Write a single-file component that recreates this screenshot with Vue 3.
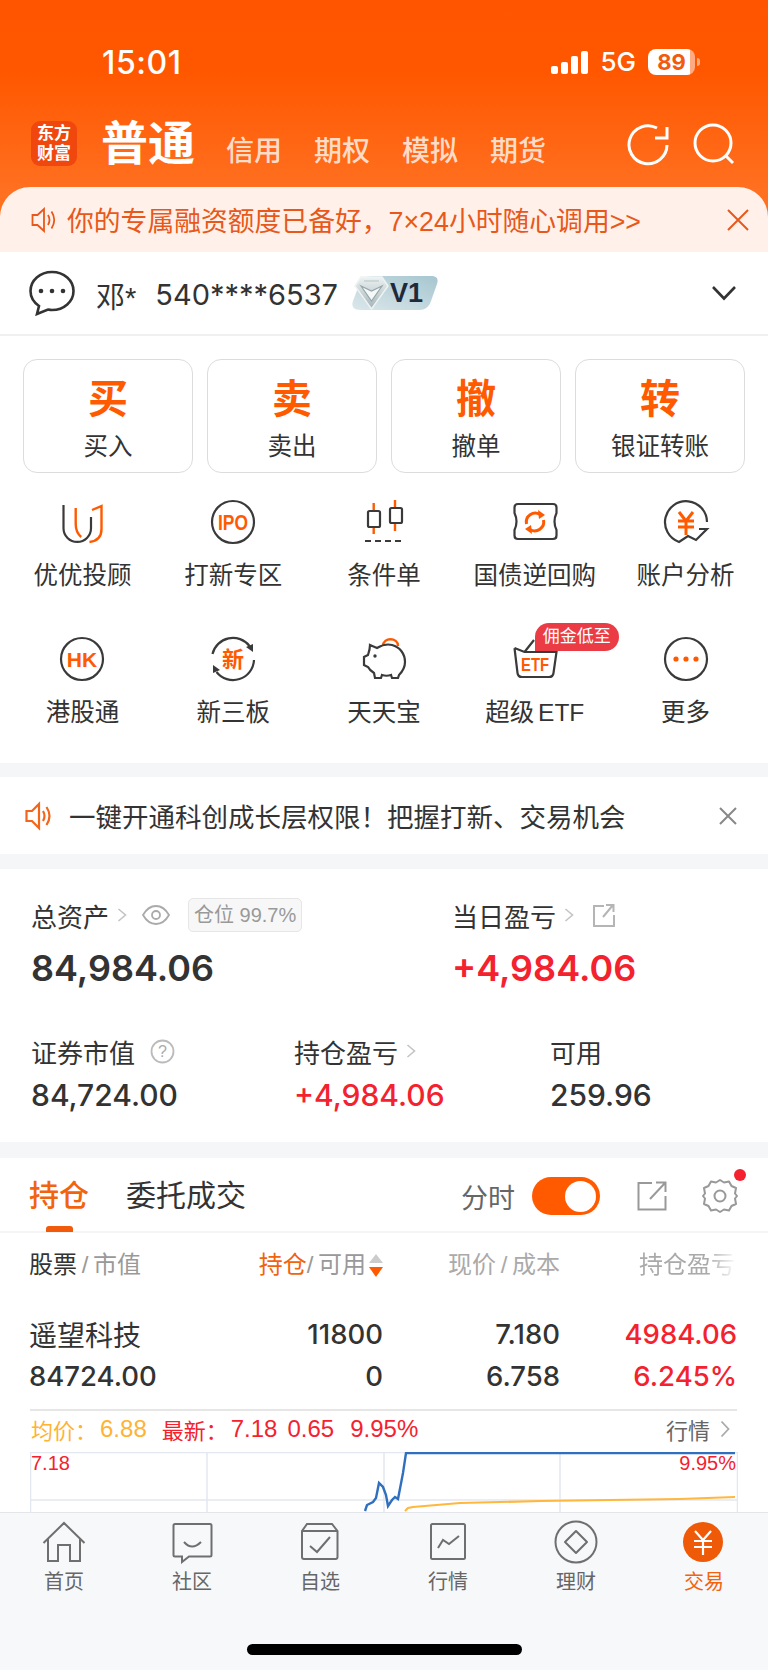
<script setup>
const actions = [
  { big: '买', label: '买入' },
  { big: '卖', label: '卖出' },
  { big: '撤', label: '撤单' },
  { big: '转', label: '银证转账' },
]
const nav = ['信用', '期权', '模拟', '期货']
const bluePts = '335,59 337,53 343,50 346,46 349,31 353,35 356,43 358,54 362,48 365,45 368,47 373,21 376,1 705,1'
const yellowPts = '375,59 378,56 383,55 430,51 510,49 650,47 705,45'
</script>

<template>
  <div class="app">
    <div class="scroll">
      <div class="top">
        <div class="status">
          <span class="time">15:01</span>
          <div class="status-right">
            <div class="signal"><i class="b1"></i><i class="b2"></i><i class="b3"></i><i class="b4"></i></div>
            <span class="net">5G</span>
            <div class="battery">89</div>
            <i class="tip"></i>
          </div>
        </div>
        <div class="nav">
          <div class="logo"><span>东方</span><span>财富</span></div>
          <span class="nav-main">普通</span>
          <span v-for="n in nav" :key="n" class="nav-sub">{{ n }}</span>
          <div class="nav-icons">
            <svg width="44" height="44" viewBox="0 0 44 44" fill="none" stroke="#fff" stroke-width="3">
              <path d="M41 23A19 19 0 1 1 31 6" />
              <path d="M29 16H41V5" />
            </svg>
            <svg width="44" height="44" viewBox="0 0 44 44" fill="none" stroke="#fff" stroke-width="3">
              <circle cx="21" cy="21" r="18" />
              <path d="M33 33L41 41" />
            </svg>
          </div>
        </div>
        <div class="banner">
          <svg class="spk" width="26" height="26" viewBox="0 0 26 26" fill="none" stroke="#e8581a" stroke-width="1.8">
            <path d="M1.5 8H6.5L13 2V24L6.5 18H1.5Z" />
            <path d="M17 8Q20 13 17 18" />
            <path d="M20.5 4.5Q26 13 20.5 21.5" />
          </svg>
          <span class="banner-text">你的专属融资额度已备好&#xFF0C;7×24小时随心调用&gt;&gt;</span>
          <svg class="banner-x" width="24" height="24" viewBox="0 0 24 24" fill="none" stroke="#e8581a" stroke-width="2">
            <path d="M2 2L22 22M22 2L2 22" />
          </svg>
        </div>
      </div>

      <div class="account">
        <svg width="46" height="46" viewBox="0 0 46 46" fill="none" stroke="#333" stroke-width="2.6">
          <path d="M23 2C11 2 1.5 10.5 1.5 21C1.5 27.5 5 32.5 10 36L8 44L19 39.5C20.5 39.8 21.8 40 23 40C35 40 44.5 31.5 44.5 21C44.5 10.5 35 2 23 2Z" />
          <circle cx="12" cy="21" r="2.3" fill="#333" stroke="none" />
          <circle cx="23" cy="21" r="2.3" fill="#333" stroke="none" />
          <circle cx="34" cy="21" r="2.3" fill="#333" stroke="none" />
        </svg>
        <span class="acc-name">邓*</span>
        <span class="acc-no num">540****6537</span>
        <svg class="vip" width="88" height="36" viewBox="0 0 88 36">
          <defs>
            <linearGradient id="vipg" x1="1" y1="0" x2="0" y2="1">
              <stop offset="0" stop-color="#a6c6d0" />
              <stop offset="1" stop-color="#dbe7ea" />
            </linearGradient>
            <linearGradient id="dia" x1="0" y1="0" x2="0" y2="1">
              <stop offset="0" stop-color="#eef2f2" />
              <stop offset="1" stop-color="#a3b4b8" />
            </linearGradient>
          </defs>
          <path d="M22 1H80C85 1 88 3 86 9L80 26C78 32 74 35 68 35H10C3 35 0 32 2 26L8 10C10 4 14 1 22 1Z" fill="url(#vipg)" />
          <path d="M4 11L10 2H31L37 11L20.5 34Z" fill="url(#dia)" stroke="#eef3f3" stroke-width="1.5" />
          <path d="M10 11L20.5 26L31 11L20.5 16Z" fill="#f6f8f8" stroke="#94a6aa" stroke-width="1.2" />
          <path d="M13 6H28" stroke="#c3d0d2" stroke-width="1.5" />
          <text x="39" y="27" class="vip-text">V1</text>
        </svg>
        <svg class="acc-chev" width="26" height="16" viewBox="0 0 26 16" fill="none" stroke="#333" stroke-width="2.6">
          <path d="M2 2L13 13.5L24 2" />
        </svg>
      </div>

      <div class="panel">
        <div class="actions">
          <div v-for="a in actions" :key="a.big" class="action">
            <span class="action-big">{{ a.big }}</span>
            <span class="action-label">{{ a.label }}</span>
          </div>
        </div>

        <div class="grid">
          <div class="cell">
            <svg class="ic" viewBox="0 0 44 44">
              <path class="dk" d="M3.5 5V28.2a13.75 13.75 0 0 0 27.5 0V17" />
              <path class="og" d="M15.7 8V24c0 6 2 10 5.5 13" />
              <path class="og" d="M32 10L41.5 6V29c0 8-4 12-12 13" />
            </svg>
            <span>优优投顾</span>
          </div>
          <div class="cell">
            <svg class="ic" viewBox="0 0 44 44">
              <circle class="dk" cx="22" cy="22" r="21" />
              <text x="22" y="30" class="ic-text" font-size="22" textLength="30" lengthAdjust="spacingAndGlyphs">IPO</text>
            </svg>
            <span>打新专区</span>
          </div>
          <div class="cell">
            <svg class="ic" viewBox="0 0 44 44">
              <path class="og" d="M11.7 3V34M33 0V31" />
              <rect class="dk whitefill" x="6" y="11" width="12" height="16" rx="1.5" />
              <rect class="dk whitefill" x="28" y="8" width="12" height="15" rx="1.5" />
              <path class="dk" stroke-dasharray="6 4" d="M3 41H42" />
            </svg>
            <span>条件单</span>
          </div>
          <div class="cell">
            <svg class="ic" viewBox="0 0 44 44">
              <path class="dk" d="M5 4H40Q43.5 4 43.5 7.5V13Q39.5 21.5 43.5 30V35.5Q43.5 39 40 39H5Q1.5 39 1.5 35.5V30Q5.5 21.5 1.5 13V7.5Q1.5 4 5 4Z" />
              <path class="og thick" d="M13.5 24A9 9 0 0 1 27 14.5" />
              <path class="og thick" d="M30.5 20A9 9 0 0 1 17 29.5" />
              <polygon class="ogf" points="25,10 32,15 26,19" />
              <polygon class="ogf" points="19,34 12,29 18,25" />
            </svg>
            <span>国债逆回购</span>
          </div>
          <div class="cell">
            <svg class="ic" viewBox="0 0 44 44">
              <path class="dk" d="M43 22A21 21 0 1 0 15 42L24 36L32 40L43 29H35" />
              <path class="og thick" d="M15 12L22 21L29 12M14 21H30M14 27H30M22 21V35" />
            </svg>
            <span>账户分析</span>
          </div>
          <div class="cell">
            <svg class="ic" viewBox="0 0 44 44">
              <circle class="dk" cx="22" cy="22" r="21" />
              <text x="22" y="29.5" class="ic-text" font-size="21">HK</text>
            </svg>
            <span>港股通</span>
          </div>
          <div class="cell">
            <svg class="ic" viewBox="0 0 44 44">
              <path class="dk" d="M1.5 17A21 21 0 0 1 38.5 9" />
              <polygon class="dkf" points="35,10 42,7 42,15" />
              <path class="dk" d="M43 23A21 21 0 0 1 5.5 35" />
              <polygon class="dkf" points="9,33 2,36 2,28" />
              <text x="22" y="30" class="ic-text cjk" font-size="22">新</text>
            </svg>
            <span>新三板</span>
          </div>
          <div class="cell">
            <svg class="ic" viewBox="0 0 44 44">
              <path class="og" d="M21 9C21 0 36 0 36 9" />
              <path class="dk whitefill" d="M8 8L15 11C20 8 26 7 30 8C38 10 43 17 43 25C43 31 40 35 37 38L36 41H30L29 38C26 39 23 39 20 38L19 41H13L12 36C9 34 7 32 6 30L2 28V20L6 18C7 15 8 12 8 8Z" />
              <circle cx="13" cy="19" r="1.7" fill="#3a3a3a" />
            </svg>
            <span>天天宝</span>
          </div>
          <div class="cell">
            <div class="badge">佣金低至</div>
            <svg class="ic" viewBox="0 0 44 44">
              <path class="dk" d="M1.5 11L4.5 36Q5 40 9 40H36Q40 40 40.5 36L43.5 15H11.5L1.5 11M11.5 15L21 3" />
              <text x="22" y="34" class="ic-text" font-size="19" textLength="28" lengthAdjust="spacingAndGlyphs">ETF</text>
            </svg>
            <span class="etf-label">超级 ETF</span>
          </div>
          <div class="cell">
            <svg class="ic" viewBox="0 0 44 44">
              <circle class="dk" cx="22" cy="22" r="21" />
              <circle class="ogf" cx="12" cy="22" r="2.6" />
              <circle class="ogf" cx="22" cy="22" r="2.6" />
              <circle class="ogf" cx="32" cy="22" r="2.6" />
            </svg>
            <span>更多</span>
          </div>
        </div>
      </div>

      <div class="sep s14"></div>

      <div class="notice">
        <svg width="28" height="30" viewBox="0 0 28 30" fill="none" stroke="#f4651a" stroke-width="2.2">
          <path d="M1.5 10H7L14 3V27L7 20H1.5Z" />
          <path d="M18 10Q21 15 18 20" />
          <path d="M21.5 6Q27.5 15 21.5 24" />
        </svg>
        <span class="notice-text">一键开通科创成长层权限&#xFF01;把握打新、交易机会</span>
        <svg class="notice-x" width="20" height="20" viewBox="0 0 20 20" fill="none" stroke="#888" stroke-width="2">
          <path d="M2 2L18 18M18 2L2 18" />
        </svg>
      </div>

      <div class="sep s15"></div>

      <div class="assets">
        <div class="row-a">
          <div>
            <div class="lbl">
              <span>总资产</span>
              <svg class="chev" width="10" height="14" viewBox="0 0 10 14" fill="none" stroke="#c4c4c4" stroke-width="1.6"><path d="M1.5 1L8.5 7L1.5 13" /></svg>
              <svg class="eye" width="28" height="20" viewBox="0 0 28 20" fill="none" stroke="#aaa" stroke-width="1.8">
                <path d="M1 10C5 3 9 1 14 1S23 3 27 10C23 17 19 19 14 19S5 17 1 10Z" />
                <circle cx="14" cy="10" r="4" />
              </svg>
              <span class="tag">仓位 99.7%</span>
            </div>
            <div class="val-big num">84,984.06</div>
          </div>
          <div>
            <div class="lbl">
              <span>当日盈亏</span>
              <svg class="chev" width="10" height="14" viewBox="0 0 10 14" fill="none" stroke="#c4c4c4" stroke-width="1.6"><path d="M1.5 1L8.5 7L1.5 13" /></svg>
              <svg class="share" width="24" height="24" viewBox="0 0 24 24" fill="none" stroke="#b5b5b5" stroke-width="2">
                <path d="M12 3H2V23H22V12" />
                <path d="M11 14L21 2M14 2H21.5V9" />
              </svg>
            </div>
            <div class="val-big num red">+4,984.06</div>
          </div>
        </div>
        <div class="row-b">
          <div>
            <div class="lbl">
              <span>证券市值</span>
              <svg class="help" width="25" height="25" viewBox="0 0 25 25">
                <circle cx="12.5" cy="12.5" r="11" fill="none" stroke="#bbb" stroke-width="1.8" />
                <text x="12.5" y="18" class="help-text">?</text>
              </svg>
            </div>
            <div class="val num">84,724.00</div>
          </div>
          <div>
            <div class="lbl">
              <span>持仓盈亏</span>
              <svg class="chev" width="10" height="14" viewBox="0 0 10 14" fill="none" stroke="#c4c4c4" stroke-width="1.6"><path d="M1.5 1L8.5 7L1.5 13" /></svg>
            </div>
            <div class="val num red">+4,984.06</div>
          </div>
          <div>
            <div class="lbl"><span>可用</span></div>
            <div class="val num">259.96</div>
          </div>
        </div>
      </div>

      <div class="sep s16"></div>

      <div class="tabs">
        <span class="tab active">持仓<i class="tab-bar"></i></span>
        <span class="tab">委托成交</span>
        <div class="tabs-right">
          <span class="fs">分时</span>
          <div class="toggle"><i></i></div>
          <svg class="ext" width="30" height="30" viewBox="0 0 30 30" fill="none" stroke="#999" stroke-width="2">
            <path d="M15 2H1.5V28.5H28.5V15" />
            <path d="M13 18L28 2M19 1.5H28.5V11" />
          </svg>
          <div class="gear-wrap">
            <svg width="36" height="36" viewBox="0 0 36 36" fill="none" stroke="#999" stroke-width="2">
              <path d="M18 2L22 4.5L27 3.5L29.5 8L34 10L33 15.5L35 18L33 20.5L34 26L29.5 28L27 32.5L22 31.5L18 34L14 31.5L9 32.5L6.5 28L2 26L3 20.5L1 18L3 15.5L2 10L6.5 8L9 3.5L14 4.5Z" stroke-linejoin="round" />
              <circle cx="18" cy="18" r="5.5" />
            </svg>
            <i class="dot"></i>
          </div>
        </div>
      </div>

      <div class="thead">
        <div><span class="dark">股票</span><span class="gray"> / 市值</span></div>
        <div class="r">
          <span class="orange">持仓</span><span class="gray"> / 可用</span>
          <svg class="sort" width="14" height="28" viewBox="0 0 14 28">
            <polygon points="7,3 14,12 0,12" fill="#ccc" />
            <polygon points="0,16 14,16 7,26" fill="#ff5a00" />
          </svg>
        </div>
        <div class="r lightgray">现价 / 成本</div>
        <div class="r lightgray"><span class="fade">持仓盈亏</span></div>
      </div>

      <div class="trow">
        <div class="stock">遥望科技</div>
        <div class="r num">11800</div>
        <div class="r num">7.180</div>
        <div class="r num red">4984.06</div>
        <div class="num">84724.00</div>
        <div class="r num">0</div>
        <div class="r num">6.758</div>
        <div class="r num red">6.245%</div>
      </div>

      <div class="divider"></div>

      <div class="info">
        <span class="yellow">均价&#xFF1A;</span><span class="yellow gap-3 num-l">6.88</span>
        <span class="redtxt m15">最新&#xFF1A;</span><span class="redtxt gap-3 num-l">7.18</span>
        <span class="redtxt m10 num-l">0.65</span>
        <span class="redtxt m16 num-l">9.95%</span>
        <span class="more">行情
          <svg width="10" height="18" viewBox="0 0 10 18" fill="none" stroke="#aaa" stroke-width="1.8"><path d="M1.5 1.5L8.5 9L1.5 16.5" /></svg>
        </span>
      </div>

      <svg class="chart" width="708" height="62" viewBox="0 0 708 62">
        <path class="gridline" d="M.5 62V.5H707.5V62M177 0V62M354 0V62M530 0V62M0 48H708" />
        <polyline :points="yellowPts" class="yl" />
        <polyline :points="bluePts" class="bl" />
        <text x="1" y="18" class="chart-text">7.18</text>
        <text x="706" y="18" class="chart-text end">9.95%</text>
      </svg>
    </div>

    <div class="tabbar">
      <div class="tb">
        <svg class="tbi" viewBox="0 0 44 44">
          <path d="M1.5 23L22 3L42.5 23M6 18V41H16V25H28V41H38V18" />
        </svg>
        <span>首页</span>
      </div>
      <div class="tb">
        <svg class="tbi" viewBox="0 0 44 44">
          <path d="M5 4H40Q41.5 4 41.5 5.5V35Q41.5 36.5 40 36.5H19L12 42V36.5H5Q3.5 36.5 3.5 35V5.5Q3.5 4 5 4Z" />
          <path d="M14 22Q22 31 31 22" />
        </svg>
        <span>社区</span>
      </div>
      <div class="tb">
        <svg class="tbi" viewBox="0 0 44 44">
          <path d="M9 4H34L39.5 11V37Q39.5 39 37.5 39H6Q4 39 4 37V11ZM4 11H39.5" />
          <path d="M12 26L19 32L32 17" />
        </svg>
        <span>自选</span>
      </div>
      <div class="tb">
        <svg class="tbi" viewBox="0 0 44 44">
          <rect x="5" y="4" width="34" height="35" rx="1.5" />
          <path d="M12 28L17 20L23 24L33 16" />
        </svg>
        <span>行情</span>
      </div>
      <div class="tb">
        <svg class="tbi" viewBox="0 0 44 44">
          <circle cx="22" cy="22" r="20.5" />
          <path d="M22 11L33 22L22 33L11 22Z" stroke-linejoin="round" />
        </svg>
        <span>理财</span>
      </div>
      <div class="tb on">
        <svg class="tbi" viewBox="0 0 44 44">
          <circle cx="21" cy="22" r="20" fill="#ee5a08" stroke="none" />
          <path class="w" d="M13 11L21 20L29 11M12 21H30M12 27H30M21 20V35" />
        </svg>
        <span>交易</span>
      </div>
    </div>
    <div class="home"></div>
  </div>
</template>

<style>
html, body { margin: 0; padding: 0; background: #fff; }
</style>

<style scoped>
.app {
  position: relative;
  width: 768px;
  height: 1670px;
  display: flex;
  flex-direction: column;
  overflow: hidden;
  background: #fff;
  color: #333;
  font-family: "Liberation Sans", "Noto Sans CJK SC", sans-serif;
}
.scroll { flex: 1; min-height: 0; overflow: hidden; }
.num { font-family: "Inter", "Noto Sans CJK SC", sans-serif; }
.red { color: #f4222e; }

.top {
  height: 252px;
  background: linear-gradient(#ff5500 0, #ff5700 70px, #ff7020 190px);
  display: flex;
  flex-direction: column;
}
.status {
  margin-top: 44px;
  height: 36px;
  padding: 0 68px 0 102px;
  display: flex;
  align-items: center;
  justify-content: space-between;
  color: #fff;
}
.time { padding-top: 1px; font: 500 32px/36px "Inter", sans-serif; letter-spacing: .6px; }
.status-right { display: flex; align-items: center; }
.signal { display: flex; align-items: flex-end; gap: 3px; height: 23px; }
.signal i { display: block; width: 7px; background: #fff; border-radius: 2px; }
.b1 { height: 8px; } .b2 { height: 12px; } .b3 { height: 18px; } .b4 { height: 23px; }
.net { margin-left: 12px; font: 500 26px/36px "Inter", sans-serif; }
.battery {
  margin-left: 12px;
  width: 47px;
  height: 26px;
  border-radius: 8px;
  background: linear-gradient(90deg, #fff 89%, rgba(255,255,255,.5) 89%);
  color: #f25a0e;
  font: 700 22px/26px "Inter", sans-serif;
  text-align: center;
}
.tip { display: block; width: 3px; height: 8px; margin-left: 2px; background: rgba(255,255,255,.5); border-radius: 0 3px 3px 0; }

.nav {
  margin-top: 41px;
  height: 45px;
  padding: 0 32px 0 31px;
  display: flex;
  align-items: center;
  color: #fff;
}
.logo {
  width: 46px;
  height: 45px;
  border-radius: 9px;
  background: #f0470f;
  display: flex;
  flex-direction: column;
  align-items: center;
  justify-content: center;
  font-size: 17px;
  line-height: 20px;
  font-weight: 700;
}
.nav-main { margin-left: 24px; font-size: 47px; line-height: 45px; font-weight: 700; }
.nav-sub {
  margin-left: 32px;
  padding-top: 16px;
  font-size: 28px;
  line-height: 36px;
  font-weight: 500;
  color: #ffdcc8;
}
.nav-main + .nav-sub { margin-left: 31px; }
.nav-icons { margin-left: auto; display: flex; gap: 22px; }

.banner {
  margin-top: 21px;
  flex: 1;
  border-radius: 30px 30px 0 0;
  background: #fff1ea;
  display: flex;
  align-items: center;
  padding: 0 18px 0 31px;
  color: #e8581a;
}
.banner-text { margin-left: 10px; font-size: 26.8px; white-space: nowrap; }
.banner-x { margin-left: auto; }

.account {
  height: 84px;
  box-sizing: border-box;
  border-bottom: 2px solid #f0f0f0;
  padding: 0 31px 0 29px;
  display: flex;
  align-items: center;
}
.acc-name { margin-left: 21px; padding-top: 3px; font-size: 29px; }
.acc-no { margin-left: 19px; padding-top: 3px; font-size: 29px; }
.vip { margin-left: 13px; }
.vip-text { font: 700 27px "Liberation Sans", sans-serif; fill: #1e2a3c; }
.acc-chev { margin-left: auto; }

.panel { padding: 23px 23px 35px; }
.actions { display: grid; grid-template-columns: repeat(4, 1fr); gap: 14px; }
.action {
  height: 114px;
  box-sizing: border-box;
  border: 1.5px solid #dcdcdc;
  border-radius: 14px;
  display: flex;
  flex-direction: column;
  align-items: center;
  padding-top: 17px;
}
.action-big { font-size: 40px; line-height: 44px; font-weight: 700; color: #ff5a00; }
.action-label { margin-top: 11px; font-size: 24.5px; line-height: 30px; color: #333; }

.grid {
  margin: 27px -16px 0;
  display: grid;
  grid-template-columns: repeat(5, 1fr);
  row-gap: 46px;
}
.cell {
  position: relative;
  display: flex;
  flex-direction: column;
  align-items: center;
  font-size: 24.5px;
  line-height: 30px;
  color: #333;
  white-space: nowrap;
}
.cell > span { margin-top: 17px; }
.cell > .etf-label { word-spacing: -3px; }
.ic { display: block; width: 44px; height: 44px; overflow: visible; }
.dk { fill: none; stroke: #3a3a3a; stroke-width: 2.2; }
.whitefill { fill: #fff; }
.dkf { fill: #3a3a3a; }
.og { fill: none; stroke: #ff5a00; stroke-width: 2.4; }
.thick { stroke-width: 3; }
.ogf { fill: #ff5a00; }
.ic-text {
  font-family: "Liberation Sans", sans-serif;
  font-weight: 700;
  fill: #ff5a00;
  text-anchor: middle;
}
.ic-text.cjk { font-family: "Noto Sans CJK SC", sans-serif; }
.cell > .badge {
  position: absolute;
  left: 50%;
  top: -14px;
  z-index: 1;
  width: 84px;
  height: 28px;
  border-radius: 14px 14px 14px 0;
  background: #eb3b44;
  color: #fff;
  font-size: 17px;
  line-height: 28px;
  text-align: center;
}

.sep { background: #f5f6f8; }
.s14 { height: 14px; }
.s15 { height: 15px; }
.s16 { height: 16px; }

.notice {
  height: 77px;
  padding: 0 30px 0 25px;
  display: flex;
  align-items: center;
}
.notice-text { margin-left: 16px; font-size: 26.5px; color: #333; white-space: nowrap; }
.notice-x { margin-left: auto; }

.assets { height: 273px; box-sizing: border-box; padding: 31px 0 0 31px; }
.row-a { display: grid; grid-template-columns: 421px 1fr; }
.row-b { margin-top: 46px; display: grid; grid-template-columns: 263px 256px 1fr; }
.lbl { display: flex; align-items: center; height: 30px; font-size: 26px; color: #333; white-space: nowrap; }
.chev { margin-left: 8px; }
.eye { margin-left: 15px; }
.tag {
  margin-left: 18px;
  height: 34px;
  padding: 0 5px;
  box-sizing: border-box;
  border: 1px solid #e6e6e6;
  border-radius: 5px;
  background: #f7f7f7;
  color: #999;
  font-size: 20px;
  line-height: 32px;
}
.share { margin-left: 18px; }
.help { margin-left: 15px; }
.help-text { font: 16px "Liberation Sans", sans-serif; fill: #aaa; text-anchor: middle; }
.val-big { margin-top: 16px; font-size: 36px; line-height: 44px; font-weight: 600; }
.val { margin-top: 11px; font-size: 30px; line-height: 36px; font-weight: 500; }

.tabs {
  position: relative;
  height: 75px;
  box-sizing: border-box;
  border-bottom: 2px solid #f5f5f5;
  padding: 3px 30px 0 29px;
  display: flex;
  align-items: center;
}
.tab { position: relative; font-size: 30px; line-height: 40px; color: #333; }
.tab + .tab { margin-left: 37px; }
.active { color: #f2630e; font-weight: 500; }
.tab-bar {
  position: absolute;
  left: 17px;
  top: 50px;
  width: 27px;
  height: 6px;
  border-radius: 3px 3px 0 0;
  background: #f05a0a;
}
.tabs-right { margin-left: auto; display: flex; align-items: center; }
.fs { font-size: 27px; color: #666; }
.toggle {
  margin-left: 17px;
  width: 68px;
  height: 38px;
  border-radius: 19px;
  background: #ff5a00;
  position: relative;
}
.toggle i {
  position: absolute;
  right: 4px;
  top: 3.5px;
  width: 31px;
  height: 31px;
  border-radius: 50%;
  background: #fff;
}
.ext { margin-left: 37px; }
.gear-wrap { position: relative; margin-left: 35px; height: 36px; }
.dot {
  position: absolute;
  right: -8px;
  top: -9px;
  width: 12px;
  height: 12px;
  border-radius: 50%;
  background: #f4222e;
}

.thead, .trow {
  display: grid;
  grid-template-columns: 154px 200px 177px 177px;
  padding: 0 31px 0 29px;
  white-space: nowrap;
}
.r { text-align: right; }
.thead { margin-top: 17px; font-size: 24px; line-height: 30px; }
.thead > .r { display: flex; justify-content: flex-end; align-items: center; }
.dark { color: #333; }
.gray { color: #999; word-spacing: -2px; }
.lightgray { color: #aaa; word-spacing: -2px; }
.orange { color: #f2630e; }
.sort { margin-left: 3px; }
.fade { padding-right: 2px; -webkit-mask-image: linear-gradient(90deg, #000 70%, transparent 100%); mask-image: linear-gradient(90deg, #000 70%, transparent 100%); }

.trow { margin-top: 33px; font-size: 27.5px; line-height: 42px; font-weight: 500; }
.stock { font-family: "Noto Sans CJK SC", sans-serif; font-size: 28px; font-weight: 400; }

.divider { margin: 12px 31px 0 30px; height: 1.5px; background: #e6e6e6; }

.info {
  height: 41px;
  box-sizing: border-box;
  padding: 0 38px 4px 31px;
  display: flex;
  align-items: center;
  font-size: 22px;
  white-space: nowrap;
}
.yellow { color: #ffb233; }
.redtxt { color: #f4222e; }
.gap-3 { margin-left: 3px; }
.m10 { margin-left: 10px; }
.m15 { margin-left: 15px; }
.m16 { margin-left: 16px; }
.num-l { font-size: 24px; font-family: "Liberation Sans", sans-serif; }
.more { margin-left: auto; display: flex; align-items: center; gap: 10px; color: #666; }

.chart { display: block; margin-left: 30px; }
.gridline { fill: none; stroke: #e3e7f0; stroke-width: 1.5; }
.yl { fill: none; stroke: #ffb73d; stroke-width: 2.2; }
.bl { fill: none; stroke: #2f6fbe; stroke-width: 2.4; }
.chart-text { font: 20px "Liberation Sans", sans-serif; fill: #f4222e; }
.end { text-anchor: end; }

.tabbar {
  height: 158px;
  box-sizing: border-box;
  border-top: 1.5px solid #e4e6ec;
  background: #f7f8fa;
  padding-top: 6.5px;
  display: grid;
  grid-template-columns: repeat(6, 128px);
  align-items: start;
}
.tb { display: flex; flex-direction: column; align-items: center; color: #666; font-size: 20px; line-height: 26px; }
.tb span { margin-top: 5px; }
.tbi { display: block; width: 44px; height: 44px; fill: none; stroke: #6f6f6f; stroke-width: 2; }
.tbi .w { stroke: #fff; stroke-width: 2.2; }
.on { color: #f2630e; }
.home {
  position: absolute;
  left: 247px;
  top: 1644px;
  width: 275px;
  height: 11px;
  border-radius: 6px;
  background: #000;
}
</style>
